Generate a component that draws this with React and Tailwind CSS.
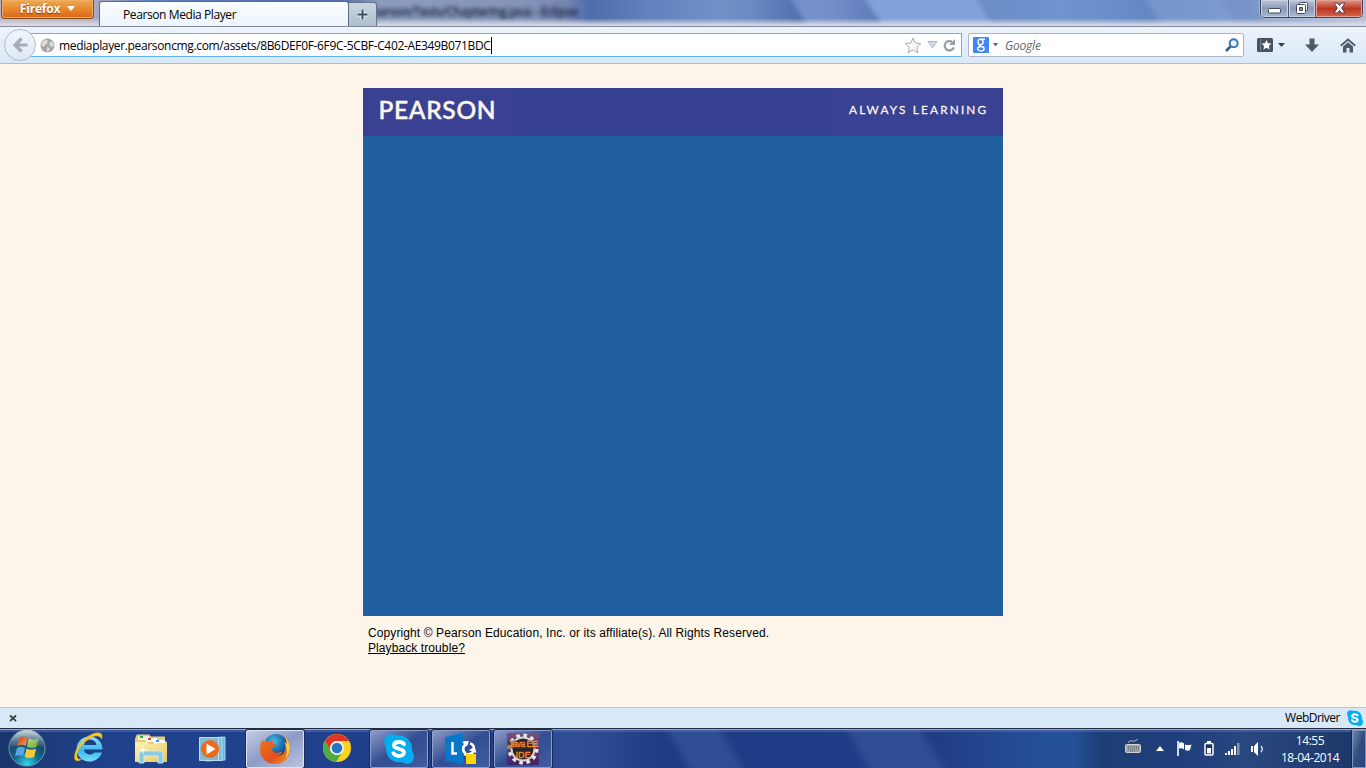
import React from "react";

const UI = "font-['Open_Sans','Noto_Sans',sans-serif]";

function Globe() {
  return (
    <svg width="15" height="15" viewBox="0 0 15 15">
      <circle cx="7.5" cy="7.5" r="7" fill="#a6a6a6" />
      <path d="M3 3l3-1.5 2 1-1 1.5 1 1-2.5 1.5L4 9 1 7zM9 5l3-2 2 4-2 2-2-1zM7 9l3 1-1 3-2 1z" fill="#dcdcdc" />
    </svg>
  );
}

function SkypeIcon({ size }) {
  return (
    <svg width={size} height={size} viewBox="0 0 30 30">
      <path d="M3 1.500Q8-1 12.500 1.800C21 0 29 7 27.800 16.500 31 21 30 25 28.500 27.500 26 30.500 21 30.500 17.500 28 8.500 29.500 1 22.500 2.200 13.500-.5 9-.5 4 3 1.500z" fill="#04adef" />
      <path d="M20 10.3C18.8 8.4 16.900 8 14.800 8 12 8 10 9.300 10 11.500c0 4.500 10 2.200 10 6.800 0 2.400-2.200 3.700-5 3.700-2.500 0-4.500-.7-5.600-2.800" fill="none" stroke="#fff" strokeWidth="3.800" strokeLinecap="round" />
    </svg>
  );
}

function TitleBar() {
  return (
    <div className="relative flex h-[27px] w-full items-start overflow-hidden border-b border-[#85899a] bg-[linear-gradient(90deg,#b9b4c3_0px,#a9abc5_95px,#6280b8_150px,#4d6ca8_340px,#8c9cbd_380px,#8595b9_520px,#7686b1_565px,#4c6dab_590px,#6282bd_650px,#7090c6_720px,#6a8ac2_750px,#4f70ad_800px,#5575b2_870px,#6b8cc4_980px,#6f94cf_1060px,#6488c2_1150px,#7895c8_1250px,#b0bcd8_1366px)]">
      <svg className="absolute inset-0" width="1366" height="26">
        <defs>
          <filter id="soft"><feGaussianBlur stdDeviation="2.500" /></filter>
          <filter id="titleblur"><feGaussianBlur stdDeviation="2.300" /></filter>
          <linearGradient id="band1" x1="0" x2="1"><stop offset="0" stopColor="#7592cc" /><stop offset=".4" stopColor="#7390c9" /><stop offset="1" stopColor="#5877b3" /></linearGradient>
          <linearGradient id="edge" x1="0" y1="0" x2="0" y2="1">
            <stop offset="0.7" stopColor="#e1e2e9" stopOpacity="0" />
            <stop offset="0.97" stopColor="#dddde6" stopOpacity="0.95" />
          </linearGradient>
        </defs>
        <g filter="url(#soft)">
          <path d="M788 -6h76l25 38h-78z" fill="url(#band1)" />
          <path d="M862 -6h112l22 38h-109z" fill="#82a1d8" />
          <path d="M1143 -6h75l22 38h-75z" fill="#83a3d5" opacity=".55" />
        </g>
        <text x="372" y="16" fontSize="12" fontFamily="Open Sans, sans-serif" fill="#202c48" filter="url(#titleblur)" textLength="206" stroke="#202c48" strokeWidth=".5">earson/Tests/Chaptering.java - Eclipse</text>
        <rect width="1366" height="26" fill="url(#edge)" />
      </svg>
      <div className="relative ml-px flex h-[19px] w-[93px] items-center justify-center gap-[7px] rounded-b-[4px] border border-t-0 border-[#8a4b16] bg-linear-to-b from-[#eeaa53] via-[#e6892c] to-[#d9661a] pb-[1px] shadow-[inset_0_0_0_1px_#efb066]">
        <span className={`${UI} text-[12px] leading-[16px] font-bold tracking-[-0.2px] text-white [text-shadow:0_1px_1px_#7b3d0c]`}>Firefox</span>
        <svg width="8" height="5" viewBox="0 0 8 5"><path d="M0 0h8L4 5z" fill="#fff" /></svg>
      </div>
      <div className="relative mt-[1px] ml-[5px] h-[25px] w-[250px] rounded-t-[3px] border border-b-0 border-[#606b82] bg-linear-to-b from-[#fafdff] to-[#ecf4fc] pl-[23px]">
        <span className={`${UI} block text-[12px] leading-[26px] tracking-[-0.4px] whitespace-nowrap text-black`}>Pearson Media Player</span>
      </div>
      <div className="relative mt-[2px] flex h-[24px] w-[28px] items-center justify-center rounded-tr-[3px] border border-b-0 border-l-0 border-[#68758a] bg-linear-to-b from-[#c9d6e2] to-[#aebfcf]">
        <svg width="11" height="11" viewBox="0 0 11 11"><path d="M5.500 0v11M0 5.500h11" stroke="#e4ebf1" strokeWidth="4" /><path d="M5.500 .5v10M.5 5.500h10" stroke="#425161" strokeWidth="2" /></svg>
      </div>
      <div className="relative mr-[3px] ml-auto flex h-[18px] w-[103px] overflow-hidden rounded-b-[5px] border border-t-0 border-[#39415b] shadow-[0_0_2px_#fff]">
        <div className="flex w-[28px] items-end justify-center border-r border-[#4d5874] bg-linear-to-b from-[#bdc6da] via-[#8c9ab8] to-[#a8b8d5] pb-[3px] shadow-[inset_0_0_0_1px_#c9d2e4]">
          <svg width="13" height="6"><rect x=".5" y=".5" width="12" height="4.500" rx="1" fill="#fff" stroke="#454b5d" /></svg>
        </div>
        <div className="flex w-[27px] items-center justify-center border-r border-[#4d5874] bg-linear-to-b from-[#bdc6da] via-[#8c9ab8] to-[#a8b8d5] pb-[2px] shadow-[inset_0_0_0_1px_#c9d2e4]">
          <svg width="13" height="12" viewBox="0 0 13 12" fill="#fff" stroke="#454b5d"><rect x="3.500" y=".5" width="8" height="8" rx="1" /><rect x=".5" y="2.500" width="9" height="9" rx="1" /><path d="M3.500 5.500h3v3h-3z" fill="#8795b2" /></svg>
        </div>
        <div className="flex flex-1 items-center justify-center bg-linear-to-b from-[#d99489] via-[#bd3423] to-[#d56548] pb-[2px] shadow-[inset_0_0_0_1px_#e5a297]">
          <svg width="13" height="12" viewBox="0 0 13 12"><path d="M1 1h3.500l2 2.500L8.500 1H12L8.700 6 12 11H8.500l-2-2.500-2 2.500H1l3.300-5z" fill="#fff" stroke="#4d3b48" /></svg>
        </div>
      </div>
    </div>
  );
}

function NavBar() {
  return (
    <div className="flex h-[37px] w-full items-start border-b border-[#a9bed1] bg-linear-to-b from-[#ecf4fc] to-[#dae8f7]">
      <div className="relative z-10 mt-[2px] ml-[4px] flex size-[32px] shrink-0 items-center justify-center rounded-full border border-[#aebdcb] bg-linear-to-b from-[#f1f6fb] to-[#dfe9f4]">
        <svg width="16" height="16" viewBox="0 0 16 16"><path d="M9.500 1.500L3 8l6.500 6.500M3.500 8H15.500" fill="none" stroke="#a2adb8" strokeWidth="3.200" /></svg>
      </div>
      <div className="mt-[6px] -ml-[6px] flex h-[24px] w-[932px] items-center border border-l-0 border-[#61b5f4] bg-white pl-[10px]">
        <Globe />
        <span className={`${UI} ml-[4px] flex h-[17px] items-center border-r border-black pt-[2px] text-[12px] leading-[16px] tracking-[-0.345px] whitespace-nowrap text-black`}>mediaplayer.pearsoncmg.com/assets/8B6DEF0F-6F9C-5CBF-C402-AE349B071BDC</span>
        <div className="mr-[5px] ml-auto flex items-center">
          <svg width="18" height="17" viewBox="0 0 18 17"><path d="M9 1l2.300 5 5.500.6-4.100 3.700 1.200 5.500L9 13l-4.900 2.800 1.200-5.500L1.200 6.600 6.700 6z" fill="#f8f8f8" stroke="#adadad" /></svg>
          <svg className="ml-[5px]" width="11" height="8" viewBox="0 0 11 8"><path d="M1 .5h9L5.500 7z" fill="#d2d9e1" stroke="#aeb7c2" /></svg>
          <svg className="ml-[5px]" width="13" height="13" viewBox="0 0 13 13"><path d="M10.800 8.500A4.700 4.700 0 1 1 9 2.800" fill="none" stroke="#929ea9" strokeWidth="2.200" /><path d="M12 0v6H6z" fill="#929ea9" /></svg>
        </div>
      </div>
      <div className="mt-[6px] ml-[6px] flex h-[24px] w-[276px] items-center rounded-[2px] border border-[#a7b7c9] bg-white pl-[4px]">
        <svg width="16" height="16" viewBox="0 0 16 16">
          <rect width="16" height="16" rx="1" fill="#4285f4" />
          <g fill="none" stroke="#fff" strokeWidth="1.400"><ellipse cx="7.500" cy="5" rx="2.600" ry="2.700" /><path d="M8 2.200h4M7 7.700q-1.500 1.200.5 1.900" /><ellipse cx="7.900" cy="11.700" rx="3.200" ry="2.200" /></g>
        </svg>
        <svg className="ml-[4px]" width="5" height="4"><path d="M0 0h5L2.500 3.500z" fill="#596575" /></svg>
        <span className={`${UI} ml-[7px] pt-[2px] text-[12px] leading-[16px] tracking-[-0.2px] text-[#666] italic`}>Google</span>
        <svg className="mr-[4px] ml-auto" width="14" height="14" viewBox="0 0 14 14"><path d="M1 13l4.500-4.500" stroke="#275f97" strokeWidth="2.500" /><circle cx="8.700" cy="5.200" r="4" fill="#e8f3fb" stroke="#3975ae" strokeWidth="2" /></svg>
      </div>
      <div className="mt-[10px] ml-[13px] flex h-[16px] items-center">
        <svg width="16" height="14" viewBox="0 0 16 14"><rect width="16" height="14" rx="1.500" fill="#465461" /><path d="M3.500 1v12" stroke="#6f7e8b" /><path d="M9.500 2l1.500 3.200 3.500.4-2.600 2.300.7 3.500-3.100-1.700-3.100 1.700.7-3.500-2.600-2.300 3.500-.4z" fill="#fff" /></svg>
        <svg className="ml-[5px]" width="7" height="5"><path d="M0 0h7L3.500 4z" fill="#34414e" /></svg>
        <svg className="ml-[20px]" width="14" height="15" viewBox="0 0 14 15"><path d="M4.500 .500h5v6H14l-7 7.500L0 6.500h4.500z" fill="#4e5b67" /></svg>
        <svg className="ml-[21px]" width="16" height="15" viewBox="0 0 16 15"><path d="M.8 7.800L8 1.500l7.200 6.300" fill="none" stroke="#4e5b67" strokeWidth="1.800" /><path d="M3 8.500l5-4.300 5 4.300V14.500H9.500V10h-3v4.500H3z" fill="#4e5b67" /></svg>
      </div>
    </div>
  );
}

function Player() {
  return (
    <main className="h-[643px] bg-[#fdf5e9] pt-[24px]">
      <div className="mx-auto w-[640px]">
        <div className="h-[48px] bg-[#374192]">
          <svg width="640" height="48">
            <rect width="152" height="48" fill="#3a4192" />
            <rect x="470" width="170" height="48" fill="#394192" />
            <text x="15.500" y="31" fontFamily="Lato, sans-serif" fontWeight="500" fontSize="24.500" textLength="117" lengthAdjust="spacing" fill="#fdf6ea" stroke="#fdf6ea" strokeWidth=".5">PEARSON</text>
            <text x="486" y="26" fontFamily="Lato, sans-serif" fontSize="12" textLength="139.500" lengthAdjust="spacing" fill="#fdf6ea" stroke="#fdf6ea" strokeWidth=".25" transform="translate(486 0) scale(.983 1) translate(-486 0)">ALWAYS LEARNING</text>
          </svg>
        </div>
        <div className="h-[480px] bg-[#1f5f9f]" />
        <div className="pt-[10px] pl-[5px] font-['Liberation_Sans',Arial,sans-serif] text-[12px] leading-[15px] text-black">
          <div className="tracking-[0.1px] whitespace-nowrap">Copyright © Pearson Education, Inc. or its affiliate(s). All Rights Reserved.</div>
          <a className="tracking-[0.09px] underline">Playback trouble?</a>
        </div>
      </div>
    </main>
  );
}

function StatusBar() {
  return (
    <div className="flex h-[21px] items-center border-t border-[#b6c6d5] bg-[#d9e8f7] pr-[3px] pl-[9px]">
      <svg width="8" height="8" viewBox="0 0 8 8"><path d="M1 1.500l6 5.500M7 1.500L1 7" stroke="#3b4248" strokeWidth="1.700" /></svg>
      <span className={`${UI} ml-auto text-[12px] leading-[18px] tracking-[-0.5px] text-black`}>WebDriver</span>
      <span className="ml-[7px]"><SkypeIcon size={16} /></span>
    </div>
  );
}

function StartOrb() {
  return (
    <svg width="38" height="38" viewBox="0 0 38 38">
      <defs>
        <radialGradient id="orb" cx=".5" cy=".95" r=".9"><stop offset="0" stopColor="#34d8ee" /><stop offset=".4" stopColor="#12688f" /><stop offset=".8" stopColor="#1b3d5d" /><stop offset="1" stopColor="#7896a9" /></radialGradient>
        <linearGradient id="gloss" x1="0" y1="0" x2="0" y2="1"><stop offset="0" stopColor="#d1dee2" stopOpacity=".9" /><stop offset="1" stopColor="#62849a" stopOpacity=".35" /></linearGradient>
        <linearGradient id="flagR" x1="0" y1="0" x2="1" y2="1"><stop offset="0" stopColor="#d73b16" /><stop offset="1" stopColor="#f4a05c" /></linearGradient>
        <linearGradient id="flagG" x1="0" y1="0" x2="1" y2="1"><stop offset="0" stopColor="#c7df82" /><stop offset="1" stopColor="#61a52e" /></linearGradient>
      </defs>
      <circle cx="19" cy="19" r="18" fill="url(#orb)" stroke="#6f9aaf" />
      <path d="M2 18a17 17 0 0 1 34 0c-9-3-25-2-34 0z" fill="url(#gloss)" />
      <path d="M11.500 8.500c3-1.600 5.500-1.200 8 .2l-2 8.300c-2.600-1.500-5.200-1.600-8 .1z" fill="url(#flagR)" />
      <path d="M21 9.300c2.800 1.500 5.600 1.700 9.500.2l-2 8.400c-2.900 1.500-6.600 1.300-9.500-.2z" fill="url(#flagG)" />
      <path d="M9 19c2.800-1.600 5.400-1.400 8 0l-2 8.300c-2.600-1.500-5.200-1.600-8 0z" fill="#55a7df" />
      <path d="M18.600 19.500c2.800 1.500 5.600 1.700 9.500.3l-2 8.200c-2.900 1.400-6.600 1.300-9.500-.2z" fill="#f7c936" />
    </svg>
  );
}

function ExplorerE() {
  return (
    <svg width="32" height="32" viewBox="0 0 32 32">
      <defs><linearGradient id="ie" x1="0" y1="0" x2="0" y2="1"><stop offset="0" stopColor="#93e2fb" /><stop offset=".55" stopColor="#37b8ee" /><stop offset="1" stopColor="#79dbf9" /></linearGradient></defs>
      <path d="M29 21.500A13 12.500 0 1 1 29.500 18.500H11a6 5.500 0 0 0 10.500 3zM11 14h12.500a6.300 6.300 0 0 0-12.500 0z" fill="url(#ie)" fillRule="evenodd" />
      <path d="M9 28c-3 2.500-6 2.500-7 .5C-.5 23 6 12 14 6 21 .8 28 .5 29 4c.4 1.300 0 3-.5 4.200C28 5 24 3.800 19 6 11 9.500 3.500 19 4 25c.2 3 2.400 3.800 5 3z" fill="#f8c91f" stroke="#e2a80d" strokeWidth=".4" />
    </svg>
  );
}

function Folder() {
  return (
    <svg width="34" height="32" viewBox="0 0 34 32">
      <defs><linearGradient id="fold" x1="0" y1="0" x2="1" y2="1"><stop offset="0" stopColor="#fff3b5" /><stop offset="1" stopColor="#e8c75c" /></linearGradient></defs>
      <path d="M2 2l1-1.500h12l2 2h14V7l2 1v20H1V5z" fill="#e5ce77" />
      <path d="M4 2h11v4H4z" fill="#fbf7df" /><path d="M6 2h3v2H6z" fill="#21b631" />
      <path d="M12 4h11v4H12z" fill="#fff" /><path d="M14 4h3v2h-3z" fill="#de4735" />
      <path d="M20 6h11v4H20z" fill="#fff" /><path d="M22 6h3v2h-3z" fill="#35a4e7" />
      <path d="M1 8h12l2 2h6l2-1h10v19H1z" fill="url(#fold)" />
      <path d="M5 29V20q0-3 3-3h17q4 0 4 3v9h-5v-7H10v7z" fill="#8acae3" stroke="#d4f2fb" strokeWidth=".8" />
      <path d="M9 12v8M5 16h8" stroke="#fff" strokeWidth=".8" /><circle cx="9" cy="16" r="1.500" fill="#fff" />
    </svg>
  );
}

function MediaIcon() {
  return (
    <svg width="28" height="26" viewBox="0 0 28 26">
      <path d="M7 2l19-1v23l-19 1z" fill="#69b6d8" stroke="#a1d9ed" />
      <path d="M4 1.500h19v23H4z" fill="#79bddd" stroke="#b1dfee" />
      <path d="M.5 1.500h19v23H.5z" fill="#82b9d6" stroke="#b8deeb" />
      <circle cx="11" cy="13" r="9" fill="#ee6a19" /><path d="M7.500 7.500v11l9-5.500z" fill="#fff" />
    </svg>
  );
}

function FirefoxIcon() {
  return (
    <svg width="32" height="32" viewBox="0 0 32 32">
      <defs><radialGradient id="fxglobe" cx=".4" cy=".3" r=".7"><stop offset="0" stopColor="#4dbde5" /><stop offset=".55" stopColor="#1b70b3" /><stop offset="1" stopColor="#123a76" /></radialGradient>
        <linearGradient id="fx" x1="0" y1="0" x2="1" y2="1"><stop offset="0" stopColor="#ee7b22" /><stop offset=".6" stopColor="#df501c" /><stop offset="1" stopColor="#f59b22" /></linearGradient></defs>
      <circle cx="17" cy="13" r="12" fill="url(#fxglobe)" />
      <path d="M25 3c4 3 6 8 6 13 0 9-7 15-15 15S1 25 1 17c0-4 .5-8 3-11l1 3c2-1 4-.8 6 .2 1-1.500 2.500-2 4-2-1 1.200-1.500 2.300-1 3.600l3 1c0 1.700-2.500 2-4 3 0 3 2 5 5 5 2 0 3.500-1.500 5.500-1-1.500 3-4 4-7 3.500 8 2 12-5 9-13 1.200.8 1.800 1.800 2.200 3C28 8.500 27 5.500 25 3z" fill="url(#fx)" />
      <path d="M25 3c7 6 8 16 1 23 3-6 2-11-.5-17 1.200.8 1.800 1.800 2.200 3C28 8.500 27 5.500 25 3z" fill="#ffd53c" />
    </svg>
  );
}

function ChromeIcon() {
  return (
    <svg width="28" height="28" viewBox="0 0 28 28">
      <circle cx="14" cy="14" r="14" fill="#ffd21c" />
      <path d="M1.900 7A14 14 0 0 1 26.100 7H14a7 7 0 0 0-6.500 9.500z" fill="#df3428" />
      <path d="M1.900 7A14 14 0 0 0 13 28l6.500-10A7 7 0 0 1 8 17.500z" fill="#51aa43" />
      <circle cx="14" cy="14" r="7" fill="#f1f3f2" /><circle cx="14" cy="14" r="5.300" fill="#2676c5" />
    </svg>
  );
}

function LyncIcon() {
  return (
    <svg width="32" height="32" viewBox="0 0 32 32">
      <path d="M0 4l18-4v31L0 28z" fill="#0877c9" />
      <path d="M18.500 10.500a4 4 0 0 1 4-.5M19 21c5 2 10-1 10-5 0-3-1.500-5-4-5.500M21 11.500a5 5 0 0 0 0 9" stroke="#fff" strokeWidth="2.600" fill="none" />
      <path d="M18 8.500l6-.5-2 5.500zM24 17l5.500-3 2 6z" fill="#fff" />
      <path d="M7.500 9v11.500H12" fill="none" stroke="#fff" strokeWidth="2.400" /><path d="M21 21h10v10H21z" fill="#ffd500" />
    </svg>
  );
}

function JavaIcon() {
  return (
    <svg width="32" height="32" viewBox="0 0 32 32">
      <defs><linearGradient id="java" x1="0" y1="0" x2="0" y2="1"><stop stopColor="#765176" /><stop offset="1" stopColor="#422369" /></linearGradient></defs>
      <rect width="32" height="32" rx="1" fill="url(#java)" />
      <circle cx="16" cy="16" r="13.500" fill="none" stroke="#e9e7e5" strokeWidth="4" strokeDasharray="3.500 3.570" />
      <circle cx="16" cy="16" r="11.500" fill="#2b2429" stroke="#d8d5d4" strokeWidth="2" />
      <rect x="1" y="7.500" width="30" height="8" fill="#3a2936" opacity=".6" />
      <g fontFamily="Liberation Sans, sans-serif" fontSize="9" fill="#fb8a20" stroke="#fb8a20" strokeWidth=".35" textAnchor="middle"><text x="16" y="14" textLength="30" lengthAdjust="spacing">Java EE</text><text x="16" y="24.500">IDE</text></g>
    </svg>
  );
}

function TaskButton({ active, className, children }) {
  return (
    <div className={`relative mt-[1px] flex h-[38px] w-[58px] items-center justify-center rounded-[2px] border shadow-[0_0_0_1px_#172a5d] ${active ? "border-[#dce3f1] bg-linear-to-br from-[#c3cce5] via-[#8e9bc5] to-[#bcc6df]" : "border-[#8f9fcb] bg-linear-to-br from-[#8f9bc9] via-[#324e91] to-[#415c9f]"} ${className}`}>{children}</div>
  );
}

function Taskbar() {
  return (
    <div className="relative flex h-[40px] items-start overflow-hidden border-t border-[#232b43] bg-[linear-gradient(90deg,#18356b_0px,#1d3c7c_50px,#20428c_110px,#213f8b_500px,#304e95_565px,#2c4a92_605px,#1e3c84_660px,#203e88_840px,#1e3a81_900px,#213f87_945px,#245098_1040px,#245098_1075px,#1d3e75_1100px,#203e7b_1180px,#29477f_1250px,#1b3768_1366px)]">
      <svg className="absolute inset-0" width="1366" height="39">
        <defs><filter id="band"><feGaussianBlur stdDeviation="3" /></filter></defs>
        <g filter="url(#band)" fill="#2f4d95"><path d="M665-4h52l29 48h-54z" /><path d="M845-4h72l30 48h-76z" /></g>
        <path d="M0 .5h1366" stroke="#98a4ce" /><path d="M0 1.500h1366M0 2.500h1366" stroke="#506aac" opacity=".6" />
      </svg>
      <div className="relative ml-[8px]"><StartOrb /></div>
      <div className="relative mt-[2px] ml-[27px]"><ExplorerE /></div>
      <div className="relative mt-[5px] ml-[29px]"><Folder /></div>
      <div className="relative mt-[7px] ml-[31px]"><MediaIcon /></div>
      <TaskButton active className="ml-[19px]"><FirefoxIcon /></TaskButton>
      <div className="relative mt-[5px] ml-[19px]"><ChromeIcon /></div>
      <TaskButton className="ml-[19px]"><SkypeIcon size={30} /></TaskButton>
      <TaskButton className="ml-[4px]"><LyncIcon /></TaskButton>
      <TaskButton className="ml-[4px]"><JavaIcon /></TaskButton>
      <div className="relative ml-auto flex h-[39px] items-center">
        <svg className="mb-[4px]" width="16" height="16" viewBox="0 0 16 16"><path d="M3 4q1-3 4-2t6-2" fill="none" stroke="#b3b6b9" /><rect x=".5" y="5.500" width="15" height="8" rx="1" fill="#a0a4a8" stroke="#d1d3d5" /><path d="M3 8h11M3 10h11M5 12h6" stroke="#56616d" strokeDasharray="1 1" /></svg>
        <svg className="ml-[15px]" width="8" height="5"><path d="M4 0l4 5H0z" fill="#fff" /></svg>
        <svg className="ml-[13px]" width="15" height="15" viewBox="0 0 15 15"><path d="M1 0v15" stroke="#fff" strokeWidth="1.600" /><path d="M2 1.500q3-1 5 1v6q-2-2-5-1zM8 3.500q3 1.200 6.500 0l-1.500 5.500q-2.500 1.500-5 0z" fill="#fff" /></svg>
        <svg className="ml-[12px]" width="10" height="15" viewBox="0 0 10 15"><path d="M3 0h4v2H3z" fill="#fff" /><rect x="1" y="2.500" width="8" height="11.500" rx="1" fill="#203659" stroke="#fff" strokeWidth="1.500" /><path d="M3 7h4v5.500H3z" fill="#fff" /></svg>
        <svg className="ml-[11px]" width="16" height="14" viewBox="0 0 16 14"><path d="M0 11h2v2H0zM3 9h2v4H3zM6 7h2v6H6zM9 4h2v9H9z" fill="#fff" /><path d="M12 1h2.500v12H12z" fill="#8795ac" /></svg>
        <svg className="ml-[10px]" width="14" height="14" viewBox="0 0 14 14"><path d="M0 4h2v6H0zM3 4l4-4v14l-4-4z" fill="#fff" /><path d="M10 4q2.500 3 0 6" fill="none" stroke="#e8edf4" strokeWidth="1.300" /></svg>
        <div className={`${UI} ml-[15px] flex h-[34px] w-[60px] flex-col items-center text-center text-[12px] leading-[17px] tracking-[-0.45px] whitespace-nowrap text-white`}><span>14:55</span><span>18-04-2014</span></div>
        <div className="ml-[12px] h-[38px] w-[14px] border border-[#7b91b5] bg-linear-to-br from-[#7188ae] via-[#304d80] to-[#2a487c] shadow-[-1px_0_0_#122645]" />
      </div>
    </div>
  );
}

export default function App() {
  return (
    <div className="h-[768px] w-[1366px] overflow-hidden">
      <TitleBar />
      <NavBar />
      <Player />
      <StatusBar />
      <Taskbar />
    </div>
  );
}
